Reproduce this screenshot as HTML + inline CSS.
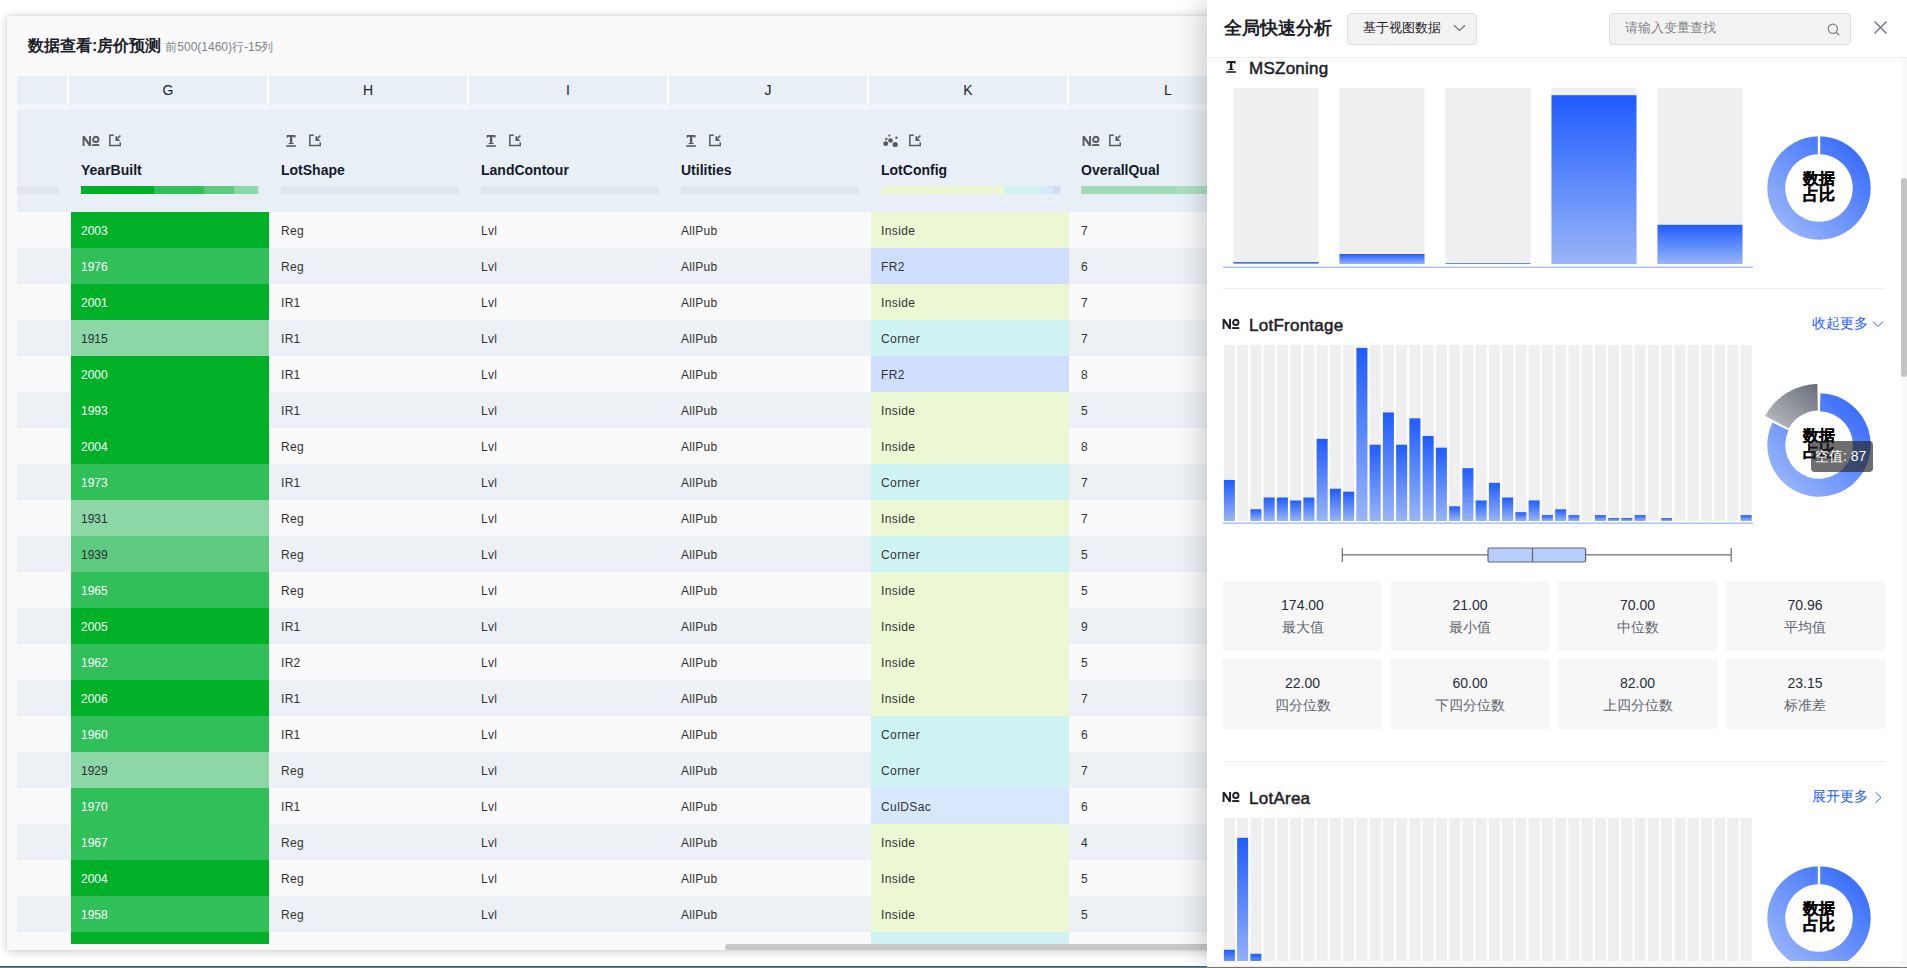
<!DOCTYPE html><html><head><meta charset="utf-8"><style>
*{box-sizing:border-box;margin:0;padding:0}
html,body{width:1907px;height:968px;overflow:hidden;background:#fff;font-family:"Liberation Sans",sans-serif;position:relative}
.abs{position:absolute}
.card{position:absolute;left:7px;top:16px;width:1230px;height:934px;background:#fafafa;box-shadow:0 1px 10px rgba(0,0,0,0.2),0 0 2px rgba(0,0,0,0.1)}
.ttl{position:absolute;left:28px;top:36px;font-size:16px;font-weight:bold;color:#1d2129;line-height:20px;white-space:nowrap}
.sub{font-size:12px;font-weight:normal;color:#7c828c;margin-left:4px}
.hl{position:absolute;top:76px;height:28px;background:#e8eff7;font-size:14px;color:#1d2129;text-align:center;line-height:28px}
.hs{position:absolute;top:104px;height:6px;background:#f2f6fa}
.hd{position:absolute;left:17px;top:110px;width:1220px;height:102px;background:#e8eff7}
.row{position:absolute;left:17px;width:1220px;height:36px}
.cell{position:absolute;top:0;height:36px;line-height:38px;font-size:12px;color:#333;white-space:nowrap}
.cname{position:absolute;top:161px;font-size:14px;font-weight:bold;color:#141a2b;white-space:nowrap;line-height:18px}
.bar{position:absolute;top:186px;height:8px}
.panel{position:absolute;left:1207px;top:0;width:700px;height:961px;background:#fff;overflow:hidden;box-shadow:-4px 0 26px rgba(0,0,0,0.2)}
</style></head><body>

<div class="card"></div>
<div class="ttl">数据查看:房价预测<span class="sub">前500(1460)行-15列</span></div>
<div class="abs" style="left:17px;top:76px;width:1220px;height:28px;background:#fff"></div>
<div class="abs" style="left:17px;top:104px;width:1220px;height:6px;background:#e8eff7"></div>
<div class="hl" style="left:17px;width:50px"></div>
<div class="hl" style="left:69px;width:198px">G</div>
<div class="hl" style="left:269px;width:198px">H</div>
<div class="hl" style="left:469px;width:198px">I</div>
<div class="hl" style="left:669px;width:198px">J</div>
<div class="hl" style="left:869px;width:198px">K</div>
<div class="hl" style="left:1069px;width:198px">L</div>
<div class="hs" style="left:17px;width:52px"></div>
<div class="hs" style="left:71px;width:198px"></div>
<div class="hs" style="left:271px;width:198px"></div>
<div class="hs" style="left:471px;width:198px"></div>
<div class="hs" style="left:671px;width:198px"></div>
<div class="hs" style="left:871px;width:198px"></div>
<div class="hs" style="left:1071px;width:198px"></div>
<div class="hd"></div>
<svg class="abs" style="left:81px;top:135px" width="19" height="12" viewBox="0 0 19 12"><path d="M1.6 11V1H3.7L8.1 7.5V1H10V11H7.9L3.5 4.5V11Z" fill="#555a63"/><ellipse cx="14.8" cy="4.4" rx="2.7" ry="2.6" stroke="#555a63" stroke-width="1.9" fill="none"/><rect x="11.2" y="9.1" width="7" height="1.9" fill="#555a63"/></svg>
<svg class="abs" style="left:109px;top:134px" width="13" height="13" viewBox="0 0 13 13"><path d="M4.8 1.2H0.8V11.6H11.2V8.2" stroke="#555a63" stroke-width="1.5" fill="none"/><path d="M11.4 1.4L7.6 5.3M7.3 2.2V6.3H10.7" stroke="#555a63" stroke-width="1.5" fill="none"/></svg>
<div class="cname" style="left:81px">YearBuilt</div>
<svg class="abs" style="left:286px;top:134px" width="11" height="13" viewBox="0 0 11 13"><path d="M0.7 1H9.5V3.8H8.3V3H6.3V9.1H7.7V9.9H2.5V9.1H3.9V3H1.9V3.8H0.7Z" fill="#555a63"/><rect x="0.2" y="11.2" width="9.6" height="1.6" fill="#555a63"/></svg>
<svg class="abs" style="left:309px;top:134px" width="13" height="13" viewBox="0 0 13 13"><path d="M4.8 1.2H0.8V11.6H11.2V8.2" stroke="#555a63" stroke-width="1.5" fill="none"/><path d="M11.4 1.4L7.6 5.3M7.3 2.2V6.3H10.7" stroke="#555a63" stroke-width="1.5" fill="none"/></svg>
<div class="cname" style="left:281px">LotShape</div>
<svg class="abs" style="left:486px;top:134px" width="11" height="13" viewBox="0 0 11 13"><path d="M0.7 1H9.5V3.8H8.3V3H6.3V9.1H7.7V9.9H2.5V9.1H3.9V3H1.9V3.8H0.7Z" fill="#555a63"/><rect x="0.2" y="11.2" width="9.6" height="1.6" fill="#555a63"/></svg>
<svg class="abs" style="left:509px;top:134px" width="13" height="13" viewBox="0 0 13 13"><path d="M4.8 1.2H0.8V11.6H11.2V8.2" stroke="#555a63" stroke-width="1.5" fill="none"/><path d="M11.4 1.4L7.6 5.3M7.3 2.2V6.3H10.7" stroke="#555a63" stroke-width="1.5" fill="none"/></svg>
<div class="cname" style="left:481px">LandContour</div>
<svg class="abs" style="left:686px;top:134px" width="11" height="13" viewBox="0 0 11 13"><path d="M0.7 1H9.5V3.8H8.3V3H6.3V9.1H7.7V9.9H2.5V9.1H3.9V3H1.9V3.8H0.7Z" fill="#555a63"/><rect x="0.2" y="11.2" width="9.6" height="1.6" fill="#555a63"/></svg>
<svg class="abs" style="left:709px;top:134px" width="13" height="13" viewBox="0 0 13 13"><path d="M4.8 1.2H0.8V11.6H11.2V8.2" stroke="#555a63" stroke-width="1.5" fill="none"/><path d="M11.4 1.4L7.6 5.3M7.3 2.2V6.3H10.7" stroke="#555a63" stroke-width="1.5" fill="none"/></svg>
<div class="cname" style="left:681px">Utilities</div>
<svg class="abs" style="left:881px;top:134px" width="18" height="14" viewBox="0 0 18 14"><circle cx="8.4" cy="1.6" r="1.1" fill="#555a63"/><circle cx="5.3" cy="4.9" r="1.2" fill="#555a63"/><circle cx="15.4" cy="3.8" r="1.2" fill="#555a63"/><circle cx="9.5" cy="6.5" r="2.3" fill="#555a63"/><circle cx="4.7" cy="9.7" r="2.4" fill="#555a63"/><circle cx="14.2" cy="10.5" r="2.6" fill="#555a63"/></svg>
<svg class="abs" style="left:909px;top:134px" width="13" height="13" viewBox="0 0 13 13"><path d="M4.8 1.2H0.8V11.6H11.2V8.2" stroke="#555a63" stroke-width="1.5" fill="none"/><path d="M11.4 1.4L7.6 5.3M7.3 2.2V6.3H10.7" stroke="#555a63" stroke-width="1.5" fill="none"/></svg>
<div class="cname" style="left:881px">LotConfig</div>
<svg class="abs" style="left:1081px;top:135px" width="19" height="12" viewBox="0 0 19 12"><path d="M1.6 11V1H3.7L8.1 7.5V1H10V11H7.9L3.5 4.5V11Z" fill="#555a63"/><ellipse cx="14.8" cy="4.4" rx="2.7" ry="2.6" stroke="#555a63" stroke-width="1.9" fill="none"/><rect x="11.2" y="9.1" width="7" height="1.9" fill="#555a63"/></svg>
<svg class="abs" style="left:1109px;top:134px" width="13" height="13" viewBox="0 0 13 13"><path d="M4.8 1.2H0.8V11.6H11.2V8.2" stroke="#555a63" stroke-width="1.5" fill="none"/><path d="M11.4 1.4L7.6 5.3M7.3 2.2V6.3H10.7" stroke="#555a63" stroke-width="1.5" fill="none"/></svg>
<div class="cname" style="left:1081px">OverallQual</div>
<div class="bar" style="left:17px;width:42px;background:#dfe6ee"></div>
<div class="bar" style="left:81px;width:73px;background:#00b128"></div>
<div class="bar" style="left:154px;width:50px;background:#30bf58"></div>
<div class="bar" style="left:204px;width:30px;background:#5dca7f"></div>
<div class="bar" style="left:234px;width:23px;background:#8dd7a6"></div>
<div class="bar" style="left:257px;width:2px;background:#b5e5c5"></div>
<div class="bar" style="left:281px;width:178px;background:#dfe6ee"></div>
<div class="bar" style="left:481px;width:178px;background:#dfe6ee"></div>
<div class="bar" style="left:681px;width:178px;background:#dfe6ee"></div>
<div class="bar" style="left:881px;width:123px;background:#ebf8d3"></div>
<div class="bar" style="left:1004px;width:38px;background:#cff3f3"></div>
<div class="bar" style="left:1042px;width:11px;background:#d7e8fd"></div>
<div class="bar" style="left:1053px;width:6px;background:#cfdefd"></div>
<div class="bar" style="left:1059px;width:1px;background:#e8c4f4"></div>
<div class="bar" style="left:1081px;width:95px;background:#a1dbb5"></div>
<div class="bar" style="left:1176px;width:64px;background:#acdfc0"></div>
<div class="row" style="top:212px;background:#fafafa"><div class="cell" style="left:54px;width:198px;background:#00b128;color:#fff;padding-left:10px">2003</div><div class="cell" style="left:264px;letter-spacing:0.3px">Reg</div><div class="cell" style="left:464px;letter-spacing:0.3px">Lvl</div><div class="cell" style="left:664px;letter-spacing:0.3px">AllPub</div><div class="cell" style="left:854px;width:198px;background:#ebf8d3;padding-left:10px;letter-spacing:0.4px">Inside</div><div class="cell" style="left:1064px">7</div></div>
<div class="row" style="top:248px;background:#edf1f6"><div class="cell" style="left:54px;width:198px;background:#30bf58;color:#fff;padding-left:10px">1976</div><div class="cell" style="left:264px;letter-spacing:0.3px">Reg</div><div class="cell" style="left:464px;letter-spacing:0.3px">Lvl</div><div class="cell" style="left:664px;letter-spacing:0.3px">AllPub</div><div class="cell" style="left:854px;width:198px;background:#cfdefd;padding-left:10px;letter-spacing:0.4px">FR2</div><div class="cell" style="left:1064px">6</div></div>
<div class="row" style="top:284px;background:#fafafa"><div class="cell" style="left:54px;width:198px;background:#00b128;color:#fff;padding-left:10px">2001</div><div class="cell" style="left:264px;letter-spacing:0.3px">IR1</div><div class="cell" style="left:464px;letter-spacing:0.3px">Lvl</div><div class="cell" style="left:664px;letter-spacing:0.3px">AllPub</div><div class="cell" style="left:854px;width:198px;background:#ebf8d3;padding-left:10px;letter-spacing:0.4px">Inside</div><div class="cell" style="left:1064px">7</div></div>
<div class="row" style="top:320px;background:#edf1f6"><div class="cell" style="left:54px;width:198px;background:#8dd7a6;color:#2b2f36;padding-left:10px">1915</div><div class="cell" style="left:264px;letter-spacing:0.3px">IR1</div><div class="cell" style="left:464px;letter-spacing:0.3px">Lvl</div><div class="cell" style="left:664px;letter-spacing:0.3px">AllPub</div><div class="cell" style="left:854px;width:198px;background:#cff3f3;padding-left:10px;letter-spacing:0.4px">Corner</div><div class="cell" style="left:1064px">7</div></div>
<div class="row" style="top:356px;background:#fafafa"><div class="cell" style="left:54px;width:198px;background:#00b128;color:#fff;padding-left:10px">2000</div><div class="cell" style="left:264px;letter-spacing:0.3px">IR1</div><div class="cell" style="left:464px;letter-spacing:0.3px">Lvl</div><div class="cell" style="left:664px;letter-spacing:0.3px">AllPub</div><div class="cell" style="left:854px;width:198px;background:#cfdefd;padding-left:10px;letter-spacing:0.4px">FR2</div><div class="cell" style="left:1064px">8</div></div>
<div class="row" style="top:392px;background:#edf1f6"><div class="cell" style="left:54px;width:198px;background:#00b128;color:#fff;padding-left:10px">1993</div><div class="cell" style="left:264px;letter-spacing:0.3px">IR1</div><div class="cell" style="left:464px;letter-spacing:0.3px">Lvl</div><div class="cell" style="left:664px;letter-spacing:0.3px">AllPub</div><div class="cell" style="left:854px;width:198px;background:#ebf8d3;padding-left:10px;letter-spacing:0.4px">Inside</div><div class="cell" style="left:1064px">5</div></div>
<div class="row" style="top:428px;background:#fafafa"><div class="cell" style="left:54px;width:198px;background:#00b128;color:#fff;padding-left:10px">2004</div><div class="cell" style="left:264px;letter-spacing:0.3px">Reg</div><div class="cell" style="left:464px;letter-spacing:0.3px">Lvl</div><div class="cell" style="left:664px;letter-spacing:0.3px">AllPub</div><div class="cell" style="left:854px;width:198px;background:#ebf8d3;padding-left:10px;letter-spacing:0.4px">Inside</div><div class="cell" style="left:1064px">8</div></div>
<div class="row" style="top:464px;background:#edf1f6"><div class="cell" style="left:54px;width:198px;background:#30bf58;color:#fff;padding-left:10px">1973</div><div class="cell" style="left:264px;letter-spacing:0.3px">IR1</div><div class="cell" style="left:464px;letter-spacing:0.3px">Lvl</div><div class="cell" style="left:664px;letter-spacing:0.3px">AllPub</div><div class="cell" style="left:854px;width:198px;background:#cff3f3;padding-left:10px;letter-spacing:0.4px">Corner</div><div class="cell" style="left:1064px">7</div></div>
<div class="row" style="top:500px;background:#fafafa"><div class="cell" style="left:54px;width:198px;background:#8dd7a6;color:#2b2f36;padding-left:10px">1931</div><div class="cell" style="left:264px;letter-spacing:0.3px">Reg</div><div class="cell" style="left:464px;letter-spacing:0.3px">Lvl</div><div class="cell" style="left:664px;letter-spacing:0.3px">AllPub</div><div class="cell" style="left:854px;width:198px;background:#ebf8d3;padding-left:10px;letter-spacing:0.4px">Inside</div><div class="cell" style="left:1064px">7</div></div>
<div class="row" style="top:536px;background:#edf1f6"><div class="cell" style="left:54px;width:198px;background:#5dca7f;color:#2b2f36;padding-left:10px">1939</div><div class="cell" style="left:264px;letter-spacing:0.3px">Reg</div><div class="cell" style="left:464px;letter-spacing:0.3px">Lvl</div><div class="cell" style="left:664px;letter-spacing:0.3px">AllPub</div><div class="cell" style="left:854px;width:198px;background:#cff3f3;padding-left:10px;letter-spacing:0.4px">Corner</div><div class="cell" style="left:1064px">5</div></div>
<div class="row" style="top:572px;background:#fafafa"><div class="cell" style="left:54px;width:198px;background:#30bf58;color:#fff;padding-left:10px">1965</div><div class="cell" style="left:264px;letter-spacing:0.3px">Reg</div><div class="cell" style="left:464px;letter-spacing:0.3px">Lvl</div><div class="cell" style="left:664px;letter-spacing:0.3px">AllPub</div><div class="cell" style="left:854px;width:198px;background:#ebf8d3;padding-left:10px;letter-spacing:0.4px">Inside</div><div class="cell" style="left:1064px">5</div></div>
<div class="row" style="top:608px;background:#edf1f6"><div class="cell" style="left:54px;width:198px;background:#00b128;color:#fff;padding-left:10px">2005</div><div class="cell" style="left:264px;letter-spacing:0.3px">IR1</div><div class="cell" style="left:464px;letter-spacing:0.3px">Lvl</div><div class="cell" style="left:664px;letter-spacing:0.3px">AllPub</div><div class="cell" style="left:854px;width:198px;background:#ebf8d3;padding-left:10px;letter-spacing:0.4px">Inside</div><div class="cell" style="left:1064px">9</div></div>
<div class="row" style="top:644px;background:#fafafa"><div class="cell" style="left:54px;width:198px;background:#30bf58;color:#fff;padding-left:10px">1962</div><div class="cell" style="left:264px;letter-spacing:0.3px">IR2</div><div class="cell" style="left:464px;letter-spacing:0.3px">Lvl</div><div class="cell" style="left:664px;letter-spacing:0.3px">AllPub</div><div class="cell" style="left:854px;width:198px;background:#ebf8d3;padding-left:10px;letter-spacing:0.4px">Inside</div><div class="cell" style="left:1064px">5</div></div>
<div class="row" style="top:680px;background:#edf1f6"><div class="cell" style="left:54px;width:198px;background:#00b128;color:#fff;padding-left:10px">2006</div><div class="cell" style="left:264px;letter-spacing:0.3px">IR1</div><div class="cell" style="left:464px;letter-spacing:0.3px">Lvl</div><div class="cell" style="left:664px;letter-spacing:0.3px">AllPub</div><div class="cell" style="left:854px;width:198px;background:#ebf8d3;padding-left:10px;letter-spacing:0.4px">Inside</div><div class="cell" style="left:1064px">7</div></div>
<div class="row" style="top:716px;background:#fafafa"><div class="cell" style="left:54px;width:198px;background:#30bf58;color:#fff;padding-left:10px">1960</div><div class="cell" style="left:264px;letter-spacing:0.3px">IR1</div><div class="cell" style="left:464px;letter-spacing:0.3px">Lvl</div><div class="cell" style="left:664px;letter-spacing:0.3px">AllPub</div><div class="cell" style="left:854px;width:198px;background:#cff3f3;padding-left:10px;letter-spacing:0.4px">Corner</div><div class="cell" style="left:1064px">6</div></div>
<div class="row" style="top:752px;background:#edf1f6"><div class="cell" style="left:54px;width:198px;background:#8dd7a6;color:#2b2f36;padding-left:10px">1929</div><div class="cell" style="left:264px;letter-spacing:0.3px">Reg</div><div class="cell" style="left:464px;letter-spacing:0.3px">Lvl</div><div class="cell" style="left:664px;letter-spacing:0.3px">AllPub</div><div class="cell" style="left:854px;width:198px;background:#cff3f3;padding-left:10px;letter-spacing:0.4px">Corner</div><div class="cell" style="left:1064px">7</div></div>
<div class="row" style="top:788px;background:#fafafa"><div class="cell" style="left:54px;width:198px;background:#30bf58;color:#fff;padding-left:10px">1970</div><div class="cell" style="left:264px;letter-spacing:0.3px">IR1</div><div class="cell" style="left:464px;letter-spacing:0.3px">Lvl</div><div class="cell" style="left:664px;letter-spacing:0.3px">AllPub</div><div class="cell" style="left:854px;width:198px;background:#d7e8fd;padding-left:10px;letter-spacing:0.4px">CulDSac</div><div class="cell" style="left:1064px">6</div></div>
<div class="row" style="top:824px;background:#edf1f6"><div class="cell" style="left:54px;width:198px;background:#30bf58;color:#fff;padding-left:10px">1967</div><div class="cell" style="left:264px;letter-spacing:0.3px">Reg</div><div class="cell" style="left:464px;letter-spacing:0.3px">Lvl</div><div class="cell" style="left:664px;letter-spacing:0.3px">AllPub</div><div class="cell" style="left:854px;width:198px;background:#ebf8d3;padding-left:10px;letter-spacing:0.4px">Inside</div><div class="cell" style="left:1064px">4</div></div>
<div class="row" style="top:860px;background:#fafafa"><div class="cell" style="left:54px;width:198px;background:#00b128;color:#fff;padding-left:10px">2004</div><div class="cell" style="left:264px;letter-spacing:0.3px">Reg</div><div class="cell" style="left:464px;letter-spacing:0.3px">Lvl</div><div class="cell" style="left:664px;letter-spacing:0.3px">AllPub</div><div class="cell" style="left:854px;width:198px;background:#ebf8d3;padding-left:10px;letter-spacing:0.4px">Inside</div><div class="cell" style="left:1064px">5</div></div>
<div class="row" style="top:896px;background:#edf1f6"><div class="cell" style="left:54px;width:198px;background:#30bf58;color:#fff;padding-left:10px">1958</div><div class="cell" style="left:264px;letter-spacing:0.3px">Reg</div><div class="cell" style="left:464px;letter-spacing:0.3px">Lvl</div><div class="cell" style="left:664px;letter-spacing:0.3px">AllPub</div><div class="cell" style="left:854px;width:198px;background:#ebf8d3;padding-left:10px;letter-spacing:0.4px">Inside</div><div class="cell" style="left:1064px">5</div></div>
<div class="abs" style="left:71px;top:932px;width:198px;height:12px;background:#00b128"></div>
<div class="abs" style="left:871px;top:932px;width:198px;height:12px;background:#cff3f3"></div>
<div class="abs" style="left:725px;top:944px;width:520px;height:6px;border-radius:3px;background:#c8c8c8"></div>
<div class="panel">
<div class="abs" style="left:17px;top:16px;font-size:18px;font-weight:bold;color:#1d2129;line-height:24px;white-space:nowrap">全局快速分析</div>
<div class="abs" style="left:140px;top:13px;width:130px;height:32px;border:1px solid #d9dde5;border-radius:4px;background:#f2f2f2"></div>
<div class="abs" style="left:156px;top:19px;font-size:13px;color:#1d2129;line-height:18px;white-space:nowrap">基于视图数据</div>
<svg class="abs" style="left:246px;top:24px" width="13" height="8" viewBox="0 0 13 8"><path d="M1 1.2L6.5 6.5L12 1.2" stroke="#6b7079" stroke-width="1.2" fill="none"/></svg>
<div class="abs" style="left:402px;top:13px;width:242px;height:32px;border:1px solid #d9dde5;border-radius:4px;background:#f2f2f2"></div>
<div class="abs" style="left:418px;top:19px;font-size:13px;color:#83868c;line-height:18px;white-space:nowrap">请输入变量查找</div>
<svg class="abs" style="left:620px;top:23px" width="14" height="13" viewBox="0 0 14 13"><circle cx="5.8" cy="5.8" r="4.6" stroke="#7a7f88" stroke-width="1.2" fill="none"/><path d="M9.2 9.2L12.2 12.2" stroke="#7a7f88" stroke-width="1.3"/></svg>
<svg class="abs" style="left:666px;top:20px" width="15" height="15" viewBox="0 0 15 15"><path d="M1.5 1.5L13.5 13.5M13.5 1.5L1.5 13.5" stroke="#6b7079" stroke-width="1.4"/></svg>
<div class="abs" style="left:0;top:57px;width:700px;height:1px;background:#ebedf0"></div>
<div class="abs" style="left:694px;top:58px;width:6px;height:903px;background:#f9f9f9"></div>
<div class="abs" style="left:694px;top:178px;width:6px;height:199px;border-radius:3px;background:#c4c4c4"></div>
<svg width="0" height="0" style="position:absolute"><defs>
<linearGradient id="gb" x1="0" y1="0" x2="0" y2="1"><stop offset="0" stop-color="#1f5cff"/><stop offset="1" stop-color="#98b5f7"/></linearGradient>
<linearGradient id="gd" x1="1" y1="0" x2="0" y2="1"><stop offset="0" stop-color="#2a62fb"/><stop offset="1" stop-color="#a6c0fb"/></linearGradient>
<linearGradient id="gg" x1="1" y1="0" x2="0" y2="1"><stop offset="0" stop-color="#666c78"/><stop offset="1" stop-color="#c0c2c6"/></linearGradient>
</defs></svg>
<svg class="abs" style="left:19px;top:60px" width="11" height="13" viewBox="0 0 11 13"><path d="M0.7 1H9.5V3.8H8.3V3H6.3V9.1H7.7V9.9H2.5V9.1H3.9V3H1.9V3.8H0.7Z" fill="#1d2129"/><rect x="0.2" y="11.2" width="9.6" height="1.6" fill="#1d2129"/></svg>
<div class="abs" style="left:42px;top:59px;font-size:17px;font-weight:normal;-webkit-text-stroke:0.5px #1d2129;letter-spacing:0.25px;color:#1d2129;line-height:20px;white-space:nowrap">MSZoning</div>
<svg class="abs" style="left:0;top:80px" width="560" height="200" viewBox="1207 80 560 200">
<rect x="1233.5" y="88" width="85" height="176" fill="#efefef"/>
<rect x="1233.5" y="262" width="85" height="2" fill="url(#gb)"/>
<rect x="1339.5" y="88" width="85" height="176" fill="#efefef"/>
<rect x="1339.5" y="254" width="85" height="10" fill="url(#gb)"/>
<rect x="1445.5" y="88" width="85" height="176" fill="#efefef"/>
<rect x="1445.5" y="263" width="85" height="1" fill="url(#gb)"/>
<rect x="1551.5" y="88" width="85" height="176" fill="#efefef"/>
<rect x="1551.5" y="95.2" width="85" height="168.8" fill="url(#gb)"/>
<rect x="1657.5" y="88" width="85" height="176" fill="#efefef"/>
<rect x="1657.5" y="224.8" width="85" height="39.19999999999999" fill="url(#gb)"/>
<rect x="1223" y="266.5" width="530" height="1.5" fill="#aac3fb"/></svg>
<svg class="abs" style="left:557.0px;top:132.6px" width="110" height="110" viewBox="0 0 110 110"><path d="M55.0 3.299999999999997A51.7 51.7 0 1 1 54.99 3.299999999999997ZM55.0 21.200000000000003A33.8 33.8 0 1 0 55.01 21.200000000000003Z" fill="url(#gd)" fill-rule="evenodd"/><rect x="53.8" y="0" width="2.4" height="22.200000000000003" fill="#fff"/></svg>
<div class="abs" style="left:594.5px;top:170.9px;width:34px;font-size:16px;font-weight:900;-webkit-text-stroke:0.2px #000;color:#000;line-height:16px;text-align:center">数据<br>占比</div>
<div class="abs" style="left:16px;top:288px;width:662px;height:1px;background:#ebedf0"></div>
<svg class="abs" style="left:14px;top:318px" width="19" height="12" viewBox="0 0 19 12"><path d="M1.6 11V1H3.7L8.1 7.5V1H10V11H7.9L3.5 4.5V11Z" fill="#1d2129"/><ellipse cx="14.8" cy="4.4" rx="2.7" ry="2.6" stroke="#1d2129" stroke-width="1.9" fill="none"/><rect x="11.2" y="9.1" width="7" height="1.9" fill="#1d2129"/></svg>
<div class="abs" style="left:42px;top:316px;font-size:17px;font-weight:normal;-webkit-text-stroke:0.5px #1d2129;letter-spacing:0.25px;color:#1d2129;line-height:20px;white-space:nowrap">LotFrontage</div>
<div class="abs" style="left:605px;top:315px;font-size:13.5px;color:#1f5cff;line-height:18px;white-space:nowrap">收起更多</div>
<svg class="abs" style="left:665px;top:320px" width="12" height="9" viewBox="0 0 12 9"><path d="M1 1.5L6 6.5L11 1.5" stroke="#1f5cff" stroke-width="1" fill="none"/></svg>
<svg class="abs" style="left:0;top:340px" width="560" height="190" viewBox="1207 340 560 190">
<rect x="1223.90" y="345" width="11" height="176" fill="#efefef"/>
<rect x="1223.90" y="479.93" width="11" height="41.07" fill="url(#gb)"/>
<rect x="1237.15" y="345" width="11" height="176" fill="#efefef"/>
<rect x="1250.40" y="345" width="11" height="176" fill="#efefef"/>
<rect x="1250.40" y="509.27" width="11" height="11.73" fill="url(#gb)"/>
<rect x="1263.65" y="345" width="11" height="176" fill="#efefef"/>
<rect x="1263.65" y="497.53" width="11" height="23.47" fill="url(#gb)"/>
<rect x="1276.90" y="345" width="11" height="176" fill="#efefef"/>
<rect x="1276.90" y="497.53" width="11" height="23.47" fill="url(#gb)"/>
<rect x="1290.15" y="345" width="11" height="176" fill="#efefef"/>
<rect x="1290.15" y="500.47" width="11" height="20.53" fill="url(#gb)"/>
<rect x="1303.40" y="345" width="11" height="176" fill="#efefef"/>
<rect x="1303.40" y="497.53" width="11" height="23.47" fill="url(#gb)"/>
<rect x="1316.65" y="345" width="11" height="176" fill="#efefef"/>
<rect x="1316.65" y="438.87" width="11" height="82.13" fill="url(#gb)"/>
<rect x="1329.90" y="345" width="11" height="176" fill="#efefef"/>
<rect x="1329.90" y="488.73" width="11" height="32.27" fill="url(#gb)"/>
<rect x="1343.15" y="345" width="11" height="176" fill="#efefef"/>
<rect x="1343.15" y="491.67" width="11" height="29.33" fill="url(#gb)"/>
<rect x="1356.40" y="345" width="11" height="176" fill="#efefef"/>
<rect x="1356.40" y="347.93" width="11" height="173.07" fill="url(#gb)"/>
<rect x="1369.65" y="345" width="11" height="176" fill="#efefef"/>
<rect x="1369.65" y="444.73" width="11" height="76.27" fill="url(#gb)"/>
<rect x="1382.90" y="345" width="11" height="176" fill="#efefef"/>
<rect x="1382.90" y="412.47" width="11" height="108.53" fill="url(#gb)"/>
<rect x="1396.15" y="345" width="11" height="176" fill="#efefef"/>
<rect x="1396.15" y="444.73" width="11" height="76.27" fill="url(#gb)"/>
<rect x="1409.40" y="345" width="11" height="176" fill="#efefef"/>
<rect x="1409.40" y="418.33" width="11" height="102.67" fill="url(#gb)"/>
<rect x="1422.65" y="345" width="11" height="176" fill="#efefef"/>
<rect x="1422.65" y="435.93" width="11" height="85.07" fill="url(#gb)"/>
<rect x="1435.90" y="345" width="11" height="176" fill="#efefef"/>
<rect x="1435.90" y="447.67" width="11" height="73.33" fill="url(#gb)"/>
<rect x="1449.15" y="345" width="11" height="176" fill="#efefef"/>
<rect x="1449.15" y="506.33" width="11" height="14.67" fill="url(#gb)"/>
<rect x="1462.40" y="345" width="11" height="176" fill="#efefef"/>
<rect x="1462.40" y="468.20" width="11" height="52.80" fill="url(#gb)"/>
<rect x="1475.65" y="345" width="11" height="176" fill="#efefef"/>
<rect x="1475.65" y="500.47" width="11" height="20.53" fill="url(#gb)"/>
<rect x="1488.90" y="345" width="11" height="176" fill="#efefef"/>
<rect x="1488.90" y="482.87" width="11" height="38.13" fill="url(#gb)"/>
<rect x="1502.15" y="345" width="11" height="176" fill="#efefef"/>
<rect x="1502.15" y="497.53" width="11" height="23.47" fill="url(#gb)"/>
<rect x="1515.40" y="345" width="11" height="176" fill="#efefef"/>
<rect x="1515.40" y="512.20" width="11" height="8.80" fill="url(#gb)"/>
<rect x="1528.65" y="345" width="11" height="176" fill="#efefef"/>
<rect x="1528.65" y="500.47" width="11" height="20.53" fill="url(#gb)"/>
<rect x="1541.90" y="345" width="11" height="176" fill="#efefef"/>
<rect x="1541.90" y="515.13" width="11" height="5.87" fill="url(#gb)"/>
<rect x="1555.15" y="345" width="11" height="176" fill="#efefef"/>
<rect x="1555.15" y="509.27" width="11" height="11.73" fill="url(#gb)"/>
<rect x="1568.40" y="345" width="11" height="176" fill="#efefef"/>
<rect x="1568.40" y="515.13" width="11" height="5.87" fill="url(#gb)"/>
<rect x="1581.65" y="345" width="11" height="176" fill="#efefef"/>
<rect x="1594.90" y="345" width="11" height="176" fill="#efefef"/>
<rect x="1594.90" y="515.13" width="11" height="5.87" fill="url(#gb)"/>
<rect x="1608.15" y="345" width="11" height="176" fill="#efefef"/>
<rect x="1608.15" y="518.07" width="11" height="2.93" fill="url(#gb)"/>
<rect x="1621.40" y="345" width="11" height="176" fill="#efefef"/>
<rect x="1621.40" y="518.07" width="11" height="2.93" fill="url(#gb)"/>
<rect x="1634.65" y="345" width="11" height="176" fill="#efefef"/>
<rect x="1634.65" y="515.13" width="11" height="5.87" fill="url(#gb)"/>
<rect x="1647.90" y="345" width="11" height="176" fill="#efefef"/>
<rect x="1661.15" y="345" width="11" height="176" fill="#efefef"/>
<rect x="1661.15" y="518.07" width="11" height="2.93" fill="url(#gb)"/>
<rect x="1674.40" y="345" width="11" height="176" fill="#efefef"/>
<rect x="1687.65" y="345" width="11" height="176" fill="#efefef"/>
<rect x="1700.90" y="345" width="11" height="176" fill="#efefef"/>
<rect x="1714.15" y="345" width="11" height="176" fill="#efefef"/>
<rect x="1727.40" y="345" width="11" height="176" fill="#efefef"/>
<rect x="1740.65" y="345" width="11" height="176" fill="#efefef"/>
<rect x="1740.65" y="515.13" width="11" height="5.87" fill="url(#gb)"/>
<rect x="1223" y="522.5" width="530" height="1.5" fill="#aac3fb"/></svg>
<svg class="abs" style="left:0;top:540px" width="560" height="30" viewBox="1207 540 560 30"><path d="M1342.3 548V562M1342.3 554.9H1488M1585.6 554.9H1731.2M1731.2 548V562" stroke="#6b7079" stroke-width="1.2" fill="none"/><rect x="1488" y="548" width="97.6" height="14" rx="1.5" fill="#b8cdfb" stroke="#5f6672" stroke-width="1.2"/><path d="M1532.5 548V562" stroke="#5f6672" stroke-width="1.2"/></svg>
<svg class="abs" style="left:542.0px;top:374.6px" width="140" height="140" viewBox="0 0 140 140"><path d="M71.44 18.32A51.7 51.7 0 1 1 23.45 47.50L39.57 55.29A33.8 33.8 0 1 0 70.94 36.21Z" fill="url(#gd)"/><path d="M15.11 41.18A62 62 0 0 1 69.13 8.01L69.53 36.20A33.8 33.8 0 0 0 40.07 54.29Z" fill="url(#gg)" stroke="#fff" stroke-width="1.5"/></svg>
<div class="abs" style="left:594.5px;top:427.9px;width:34px;font-size:16px;font-weight:900;-webkit-text-stroke:0.2px #000;color:#000;line-height:16px;text-align:center">数据<br>占比</div>
<div class="abs" style="left:604px;top:441px;width:62px;height:31px;border-radius:4px;background:rgba(40,40,40,0.68)"></div>
<div class="abs" style="left:608px;top:447px;font-size:14px;color:#fff;line-height:18px;white-space:nowrap">空值: 87</div>
<div class="abs" style="left:16.0px;top:581px;width:159px;height:70px;background:#f7f7f7;text-align:center"><div style="position:absolute;left:0;right:0;top:14px;font-size:14px;color:#272e3b;line-height:20px">174.00</div><div style="position:absolute;left:0;right:0;top:36px;font-size:14px;color:#5f6570;line-height:20px">最大值</div></div>
<div class="abs" style="left:183.5px;top:581px;width:159px;height:70px;background:#f7f7f7;text-align:center"><div style="position:absolute;left:0;right:0;top:14px;font-size:14px;color:#272e3b;line-height:20px">21.00</div><div style="position:absolute;left:0;right:0;top:36px;font-size:14px;color:#5f6570;line-height:20px">最小值</div></div>
<div class="abs" style="left:351.0px;top:581px;width:159px;height:70px;background:#f7f7f7;text-align:center"><div style="position:absolute;left:0;right:0;top:14px;font-size:14px;color:#272e3b;line-height:20px">70.00</div><div style="position:absolute;left:0;right:0;top:36px;font-size:14px;color:#5f6570;line-height:20px">中位数</div></div>
<div class="abs" style="left:518.5px;top:581px;width:159px;height:70px;background:#f7f7f7;text-align:center"><div style="position:absolute;left:0;right:0;top:14px;font-size:14px;color:#272e3b;line-height:20px">70.96</div><div style="position:absolute;left:0;right:0;top:36px;font-size:14px;color:#5f6570;line-height:20px">平均值</div></div>
<div class="abs" style="left:16.0px;top:659px;width:159px;height:70px;background:#f7f7f7;text-align:center"><div style="position:absolute;left:0;right:0;top:14px;font-size:14px;color:#272e3b;line-height:20px">22.00</div><div style="position:absolute;left:0;right:0;top:36px;font-size:14px;color:#5f6570;line-height:20px">四分位数</div></div>
<div class="abs" style="left:183.5px;top:659px;width:159px;height:70px;background:#f7f7f7;text-align:center"><div style="position:absolute;left:0;right:0;top:14px;font-size:14px;color:#272e3b;line-height:20px">60.00</div><div style="position:absolute;left:0;right:0;top:36px;font-size:14px;color:#5f6570;line-height:20px">下四分位数</div></div>
<div class="abs" style="left:351.0px;top:659px;width:159px;height:70px;background:#f7f7f7;text-align:center"><div style="position:absolute;left:0;right:0;top:14px;font-size:14px;color:#272e3b;line-height:20px">82.00</div><div style="position:absolute;left:0;right:0;top:36px;font-size:14px;color:#5f6570;line-height:20px">上四分位数</div></div>
<div class="abs" style="left:518.5px;top:659px;width:159px;height:70px;background:#f7f7f7;text-align:center"><div style="position:absolute;left:0;right:0;top:14px;font-size:14px;color:#272e3b;line-height:20px">23.15</div><div style="position:absolute;left:0;right:0;top:36px;font-size:14px;color:#5f6570;line-height:20px">标准差</div></div>
<div class="abs" style="left:16px;top:761px;width:662px;height:1px;background:#ebedf0"></div>
<svg class="abs" style="left:14px;top:791px" width="19" height="12" viewBox="0 0 19 12"><path d="M1.6 11V1H3.7L8.1 7.5V1H10V11H7.9L3.5 4.5V11Z" fill="#1d2129"/><ellipse cx="14.8" cy="4.4" rx="2.7" ry="2.6" stroke="#1d2129" stroke-width="1.9" fill="none"/><rect x="11.2" y="9.1" width="7" height="1.9" fill="#1d2129"/></svg>
<div class="abs" style="left:42px;top:789px;font-size:17px;font-weight:normal;-webkit-text-stroke:0.5px #1d2129;letter-spacing:0.25px;color:#1d2129;line-height:20px;white-space:nowrap">LotArea</div>
<div class="abs" style="left:605px;top:788px;font-size:13.5px;color:#1f5cff;line-height:18px;white-space:nowrap">展开更多</div>
<svg class="abs" style="left:667px;top:791px" width="9" height="13" viewBox="0 0 9 13"><path d="M1.5 1.2L7 6.5L1.5 11.8" stroke="#1f5cff" stroke-width="1" fill="none"/></svg>
<svg class="abs" style="left:0;top:810px" width="560" height="151" viewBox="1207 810 560 151">
<rect x="1223.90" y="818" width="11" height="150" fill="#efefef"/>
<rect x="1223.90" y="949.8" width="11" height="18.200000000000045" fill="url(#gb)"/>
<rect x="1237.15" y="818" width="11" height="150" fill="#efefef"/>
<rect x="1237.15" y="837.8" width="11" height="130.20000000000005" fill="url(#gb)"/>
<rect x="1250.40" y="818" width="11" height="150" fill="#efefef"/>
<rect x="1250.40" y="953.8" width="11" height="14.200000000000045" fill="url(#gb)"/>
<rect x="1263.65" y="818" width="11" height="150" fill="#efefef"/>
<rect x="1276.90" y="818" width="11" height="150" fill="#efefef"/>
<rect x="1290.15" y="818" width="11" height="150" fill="#efefef"/>
<rect x="1303.40" y="818" width="11" height="150" fill="#efefef"/>
<rect x="1316.65" y="818" width="11" height="150" fill="#efefef"/>
<rect x="1329.90" y="818" width="11" height="150" fill="#efefef"/>
<rect x="1343.15" y="818" width="11" height="150" fill="#efefef"/>
<rect x="1356.40" y="818" width="11" height="150" fill="#efefef"/>
<rect x="1369.65" y="818" width="11" height="150" fill="#efefef"/>
<rect x="1382.90" y="818" width="11" height="150" fill="#efefef"/>
<rect x="1396.15" y="818" width="11" height="150" fill="#efefef"/>
<rect x="1409.40" y="818" width="11" height="150" fill="#efefef"/>
<rect x="1422.65" y="818" width="11" height="150" fill="#efefef"/>
<rect x="1435.90" y="818" width="11" height="150" fill="#efefef"/>
<rect x="1449.15" y="818" width="11" height="150" fill="#efefef"/>
<rect x="1462.40" y="818" width="11" height="150" fill="#efefef"/>
<rect x="1475.65" y="818" width="11" height="150" fill="#efefef"/>
<rect x="1488.90" y="818" width="11" height="150" fill="#efefef"/>
<rect x="1502.15" y="818" width="11" height="150" fill="#efefef"/>
<rect x="1515.40" y="818" width="11" height="150" fill="#efefef"/>
<rect x="1528.65" y="818" width="11" height="150" fill="#efefef"/>
<rect x="1541.90" y="818" width="11" height="150" fill="#efefef"/>
<rect x="1555.15" y="818" width="11" height="150" fill="#efefef"/>
<rect x="1568.40" y="818" width="11" height="150" fill="#efefef"/>
<rect x="1581.65" y="818" width="11" height="150" fill="#efefef"/>
<rect x="1594.90" y="818" width="11" height="150" fill="#efefef"/>
<rect x="1608.15" y="818" width="11" height="150" fill="#efefef"/>
<rect x="1621.40" y="818" width="11" height="150" fill="#efefef"/>
<rect x="1634.65" y="818" width="11" height="150" fill="#efefef"/>
<rect x="1647.90" y="818" width="11" height="150" fill="#efefef"/>
<rect x="1661.15" y="818" width="11" height="150" fill="#efefef"/>
<rect x="1674.40" y="818" width="11" height="150" fill="#efefef"/>
<rect x="1687.65" y="818" width="11" height="150" fill="#efefef"/>
<rect x="1700.90" y="818" width="11" height="150" fill="#efefef"/>
<rect x="1714.15" y="818" width="11" height="150" fill="#efefef"/>
<rect x="1727.40" y="818" width="11" height="150" fill="#efefef"/>
<rect x="1740.65" y="818" width="11" height="150" fill="#efefef"/>
</svg>
<svg class="abs" style="left:557.0px;top:862.6px" width="110" height="110" viewBox="0 0 110 110"><path d="M55.0 3.299999999999997A51.7 51.7 0 1 1 54.99 3.299999999999997ZM55.0 21.200000000000003A33.8 33.8 0 1 0 55.01 21.200000000000003Z" fill="url(#gd)" fill-rule="evenodd"/><rect x="53.8" y="0" width="2.4" height="22.200000000000003" fill="#fff"/></svg>
<div class="abs" style="left:594.5px;top:900.9px;width:34px;font-size:16px;font-weight:900;-webkit-text-stroke:0.2px #000;color:#000;line-height:16px;text-align:center">数据<br>占比</div>
</div>
<div class="abs" style="left:1207px;top:961px;width:693px;height:5px;background:#f9f9f9"></div>
<div class="abs" style="left:0;top:966px;width:1207px;height:1px;background:#1b6b98"></div>
<div class="abs" style="left:0;top:967px;width:1907px;height:1px;background:#7a7471"></div>
</body></html>
